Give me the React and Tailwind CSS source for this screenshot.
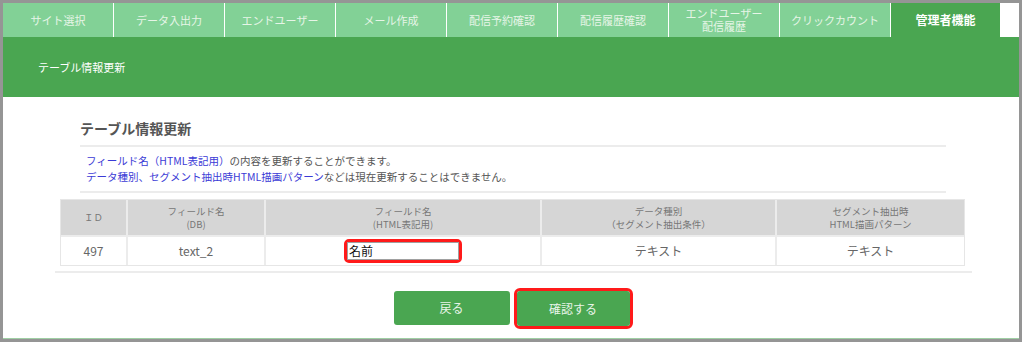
import React from 'react'

const tabs = [
    'サイト選択',
    'データ入出力',
    'エンドユーザー',
    'メール作成',
    '配信予約確認',
    '配信履歴確認',
    'エンドユーザー\n配信履歴',
    'クリックカウント',
]

const headers = [
    { w: 'w-[65px]', lines: ['ＩＤ'] },
    { w: 'w-[138px]', lines: ['フィールド名', '(DB)'] },
    { w: 'w-[276px]', lines: ['フィールド名', '(HTML表記用)'] },
    { w: 'w-[235px]', lines: ['データ種別', '（セグメント抽出条件）'] },
    { w: 'flex-1', lines: ['セグメント抽出時', 'HTML描画パターン'] },
]

export default function App() {
    return (
        <div className="w-[1024px] h-[342px] bg-white font-['Noto_Sans_CJK_JP','Noto_Sans',sans-serif]">
            <div className="w-[1022px] h-[342px] border-[3px] border-[#959595] flex flex-col">
                <div className="flex-1 flex flex-col border-b border-[#9fcfa4]">
                    {/* タブ */}
                    <div className="flex gap-px h-[34px] bg-white">
                        {tabs.map((t, i) => (
                            <div
                                key={i}
                                className="w-[110px] bg-[#82d196] flex items-center justify-center text-center text-[11px] leading-[13px] text-[#e6f5e7] whitespace-pre-line"
                            >
                                {t}
                            </div>
                        ))}
                        <div className="w-[109px] bg-[#4aa651] flex items-center justify-center text-[12px] font-bold text-white">
                            管理者機能
                        </div>
                    </div>

                    <div className="h-[60px] bg-[#4aa651] flex items-center pl-[35px] text-[11px] text-white">
                        テーブル情報更新
                    </div>

                    {/* 本文 */}
                    <div className="flex-1 flex flex-col pt-[21px]">
                        <div className="ml-[77px] w-[866px]">
                            <h2 className="text-[14px] leading-[20px] font-bold text-[#555]">テーブル情報更新</h2>
                            <div className="mt-[7px] h-[2px] bg-[#ececec]" />
                            <p className="pl-[6px] pt-[6px] pb-[6px] text-[10.5px] leading-[16px] text-[#555]">
                                <span className="text-[#3b3bd6]">フィールド名（HTML表記用）</span>の内容を更新することができます。
                                <br />
                                <span className="text-[#3b3bd6]">データ種別、セグメント抽出時HTML描画パターン</span>などは現在更新することはできません。
                            </p>
                            <div className="h-[2px] bg-[#ececec]" />
                        </div>

                        <div className="ml-[57px] w-[905px] mt-[6px] border border-[#e6e6e6]">
                            <div className="flex h-[35px] bg-[#d6d6d6]">
                                {headers.map((h, i) => (
                                    <div
                                        key={i}
                                        className={`${h.w} flex flex-col items-center justify-center text-[9.5px] leading-[13px] text-[#777] ${i > 0 ? 'border-l-2 border-[#ececec]' : ''}`}
                                    >
                                        {h.lines.map((l, j) => <span key={j}>{l}</span>)}
                                    </div>
                                ))}
                            </div>
                            <div className="flex h-[30px] text-[12px] text-[#666] border-t-2 border-[#ececec]">
                                <div className="w-[65px] flex items-center justify-center">497</div>
                                <div className="w-[138px] flex items-center justify-center border-l-2 border-[#ececec]">text_2</div>
                                <div className="w-[276px] flex items-center justify-center border-l-2 border-[#ececec]">
                                    <div className="w-[118px] h-[24px] rounded-[5px] border-[3px] border-[#ff1a1a] bg-white flex items-center">
                                        <div className="w-full h-full border border-[#a0a0a0] flex items-center pl-[1px] text-[12px] text-[#111]">名前</div>
                                    </div>
                                </div>
                                <div className="w-[235px] flex items-center justify-center border-l-2 border-[#ececec]">テキスト</div>
                                <div className="flex-1 flex items-center justify-center border-l-2 border-[#ececec]">テキスト</div>
                            </div>
                        </div>

                        <div className="ml-[52px] w-[917px] mt-[5px] h-[2px] bg-[#ececec]" />

                        <div className="flex justify-center gap-[4px] mt-[15px] pl-[4px]">
                            <button className="w-[116px] h-[34px] mt-[3px] rounded-[3px] bg-[#4aa651] text-[12px] text-[#e8f5e9]">戻る</button>
                            <div className="w-[119px] h-[41px] rounded-[6px] border-[3px] border-[#ff1a1a]">
                                <button className="w-full h-full rounded-[3px] bg-[#4aa651] text-[12px] text-[#e8f5e9]">確認する</button>
                            </div>
                        </div>
                    </div>
                </div>
            </div>
        </div>
    )
}
